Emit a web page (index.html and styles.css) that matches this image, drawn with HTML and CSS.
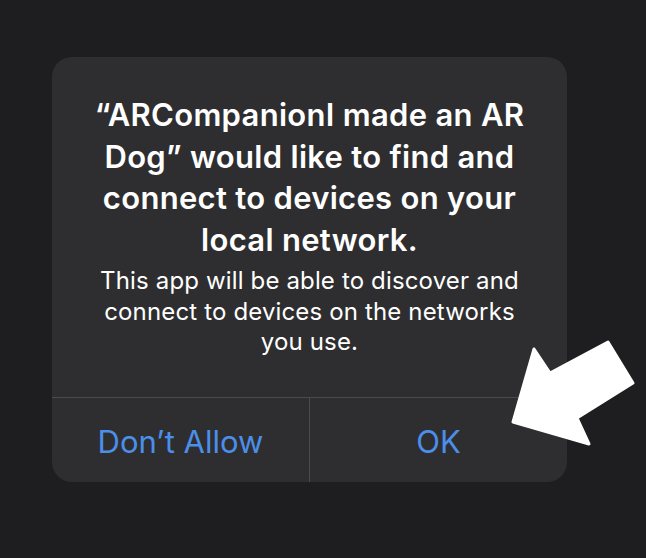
FILE: index.html
```html
<!DOCTYPE html>
<html lang="en">
  <head>
    <meta charset="UTF-8" />
    <meta name="viewport" content="width=device-width, initial-scale=1.0" />
    <title>Local Network</title>
    <link rel="stylesheet" href="styles.css">
  </head>
  <body>
    <div class="alert">
      <div class="alert-body">
        <h2 class="alert-title">“ARCompanionI made an AR Dog” would like to find and connect to devices on your local network.</h2>
        <p class="alert-text">This app will be able to discover and connect to devices on the networks you use.</p>
      </div>
      <div class="alert-actions">
        <button type="button" class="alert-btn">Don’t Allow</button>
        <button type="button" class="alert-btn">OK</button>
      </div>
    </div>

    <!-- pointer arrow -->
    <svg class="pointer" width="646" height="558" viewBox="0 0 646 558">
      <polygon points="513,422 534,349 550,373 608,342 633,383 577,418 589,444"
        fill="#fff" stroke="#fff" stroke-width="3" stroke-linejoin="round" />
    </svg>
  </body>
</html>
```

FILE: styles.css
```css
* {
  margin: 0;
  padding: 0;
  box-sizing: border-box;
  font-family: Inter, "Liberation Sans", sans-serif;
}

body {
  background-color: #1e1d1f;
  width: 646px;
  height: 558px;
  overflow: hidden;
  position: relative;
}

.alert {
  margin: 57px 0 0 52px;
  width: 515px;
  height: 425px;
  background-color: #2e2e30;
  border-radius: 20px;
  display: flex;
  flex-direction: column;
  overflow: hidden;
}

.alert-body {
  flex: 1;
  padding: 37px 28px 0;
  text-align: center;
  color: #fff;
}

.alert-title {
  font-size: 31px;
  font-weight: 600;
  line-height: 41.5px;
  letter-spacing: 0.3px;
}

.alert-text {
  margin-top: 6px;
  font-size: 24px;
  line-height: 30.5px;
  font-weight: 400;
  letter-spacing: 0.15px;
  padding: 0 8px;
}

.alert-actions {
  display: grid;
  grid-template-columns: 257px 1fr;
  height: 85px;
  border-top: 1px solid #4a4a4c;
}

.alert-btn {
  background: none;
  border: none;
  color: #4b8fea;
  font-size: 31px;
  padding-top: 2px;
}

.alert-btn + .alert-btn {
  border-left: 1px solid #4a4a4c;
}

.pointer {
  position: absolute;
  left: 0;
  top: 0;
}
```
